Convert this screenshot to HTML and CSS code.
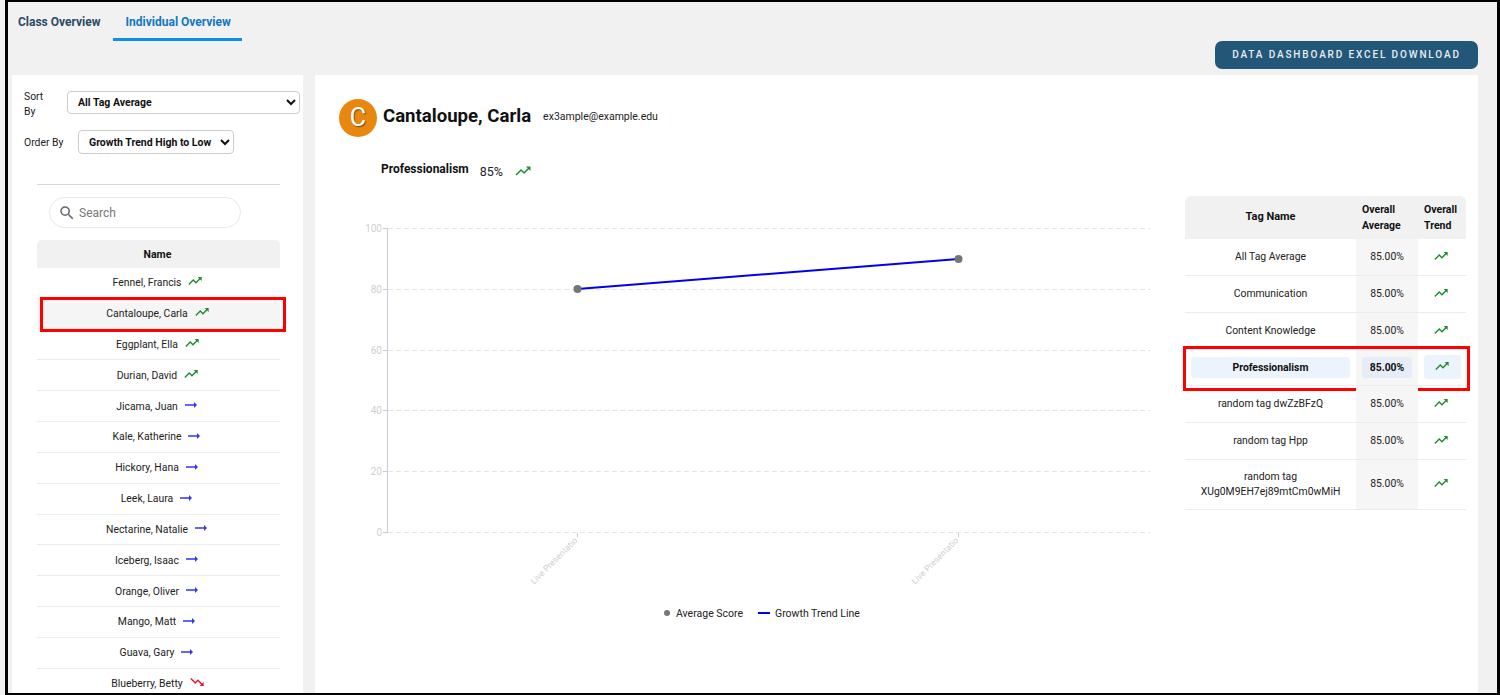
FILE: index.html
```html
<!DOCTYPE html>
<html lang="en">
<head>
<meta charset="utf-8">
<title>Individual Overview</title>
<link rel="stylesheet" href="styles.css">
</head>
<body>
<svg class="sprites" width="0" height="0" aria-hidden="true">
  <symbol id="up" viewBox="0 0 24 24"><path d="M16 6l2.29 2.29-4.88 4.88-4-4L2 16.59 3.41 18l6-6 4 4 6.3-6.29L22 12V6z"/></symbol>
  <symbol id="flat" viewBox="0 0 24 24"><path d="M16.01 11H4v2h12.01v3L20 12l-3.99-4z"/></symbol>
  <symbol id="down" viewBox="0 0 24 24"><path d="M16 18l2.29-2.29-4.88-4.88-4 4L2 7.41 3.41 6l6 6 4-4 6.3 6.29L22 12v6z"/></symbol>
</svg>
<div class="frame">
  <nav class="tabs">
    <a class="tab">Class Overview</a>
    <a class="tab active">Individual Overview</a>
  </nav>
  <div class="actions"><button class="download">DATA DASHBOARD EXCEL DOWNLOAD</button></div>
  <div class="columns">
    <aside class="side">
      <div class="field sort">
        <label class="lbl">Sort By</label>
        <select class="sel"><option>All Tag Average</option></select>
      </div>
      <div class="field order">
        <label class="lbl">Order By</label>
        <select class="sel"><option>Growth Trend High to Low</option></select>
      </div>
      <hr class="rule">
      <div class="search">
        <svg class="lens" viewBox="0 0 24 24"><path d="M15.5 14h-.79l-.28-.27A6.47 6.47 0 0 0 16 9.5 6.5 6.5 0 1 0 9.5 16c1.61 0 3.09-.59 4.23-1.57l.27.28v.79l5 4.99L20.49 19l-4.99-5zm-6 0C7.01 14 5 11.99 5 9.5S7.01 5 9.5 5 14 7.01 14 9.5 11.99 14 9.5 14z"/></svg>
        <span>Search</span>
      </div>
      <div class="names">
        <div class="names-head">Name</div>
        <div class="person">Fennel, Francis<svg class="ic up"><use href="#up"/></svg></div>
        <div class="person picked">Cantaloupe, Carla<svg class="ic up"><use href="#up"/></svg><span class="redbox"></span></div>
        <div class="person">Eggplant, Ella<svg class="ic up"><use href="#up"/></svg></div>
        <div class="person">Durian, David<svg class="ic up"><use href="#up"/></svg></div>
        <div class="person">Jicama, Juan<svg class="ic flat"><use href="#flat"/></svg></div>
        <div class="person">Kale, Katherine<svg class="ic flat"><use href="#flat"/></svg></div>
        <div class="person">Hickory, Hana<svg class="ic flat"><use href="#flat"/></svg></div>
        <div class="person">Leek, Laura<svg class="ic flat"><use href="#flat"/></svg></div>
        <div class="person">Nectarine, Natalie<svg class="ic flat"><use href="#flat"/></svg></div>
        <div class="person">Iceberg, Isaac<svg class="ic flat"><use href="#flat"/></svg></div>
        <div class="person">Orange, Oliver<svg class="ic flat"><use href="#flat"/></svg></div>
        <div class="person">Mango, Matt<svg class="ic flat"><use href="#flat"/></svg></div>
        <div class="person">Guava, Gary<svg class="ic flat"><use href="#flat"/></svg></div>
        <div class="person">Blueberry, Betty<svg class="ic down"><use href="#down"/></svg></div>
      </div>
    </aside>
    <main class="detail">
      <header class="who">
        <div class="avatar">C</div>
        <h1 class="who-name">Cantaloupe, Carla</h1>
        <span class="who-mail">ex3ample@example.edu</span>
      </header>
      <div class="metric">
        <strong class="metric-name">Professionalism</strong>
        <span class="metric-val">85%</span>
        <svg class="ic up metric-ic"><use href="#up"/></svg>
      </div>
      <div class="body">
        <svg class="chart" width="860" height="440" viewBox="0 0 860 440">
          <g class="grid">
            <line x1="73" x2="835" y1="32.5" y2="32.5"/>
            <line x1="73" x2="835" y1="93.5" y2="93.5"/>
            <line x1="73" x2="835" y1="154.5" y2="154.5"/>
            <line x1="73" x2="835" y1="214.5" y2="214.5"/>
            <line x1="73" x2="835" y1="275.5" y2="275.5"/>
            <line x1="73" x2="835" y1="336.5" y2="336.5"/>
          </g>
          <g class="axis">
            <line x1="72.5" x2="72.5" y1="32" y2="337"/>
            <line x1="68" x2="72" y1="32.5" y2="32.5"/>
            <line x1="68" x2="72" y1="93.5" y2="93.5"/>
            <line x1="68" x2="72" y1="154.5" y2="154.5"/>
            <line x1="68" x2="72" y1="214.5" y2="214.5"/>
            <line x1="68" x2="72" y1="275.5" y2="275.5"/>
            <line x1="68" x2="72" y1="336.5" y2="336.5"/>
            <line x1="262.5" x2="262.5" y1="337" y2="341"/>
            <line x1="643.5" x2="643.5" y1="337" y2="341"/>
          </g>
          <g class="ylabels">
            <text x="67" y="36">100</text>
            <text x="67" y="97">80</text>
            <text x="67" y="158">60</text>
            <text x="67" y="218">40</text>
            <text x="67" y="279">20</text>
            <text x="67" y="340">0</text>
          </g>
          <g class="xlabels">
            <text transform="translate(263 345) rotate(-45)">Live Presentatio</text>
            <text transform="translate(644 345) rotate(-45)">Live Presentatio</text>
          </g>
          <line class="trend" x1="262.5" y1="93" x2="643.5" y2="63"/>
          <circle class="pt" cx="262.5" cy="93" r="4"/>
          <circle class="pt" cx="643.5" cy="63" r="4"/>
          <circle class="pt-legend" cx="352" cy="417" r="3"/>
          <text class="legend" x="361" y="421">Average Score</text>
          <line class="trend" x1="443" x2="455" y1="417" y2="417"/>
          <text class="legend" x="460" y="421">Growth Trend Line</text>
        </svg>
        <table class="tags">
          <thead>
            <tr><th class="c-name">Tag Name</th><th class="c-avg">Overall Average</th><th class="c-tr">Overall Trend</th></tr>
          </thead>
          <tbody>
            <tr><td class="c-name">All Tag Average</td><td class="c-avg">85.00%</td><td class="c-tr"><svg class="ic up"><use href="#up"/></svg></td></tr>
            <tr><td class="c-name">Communication</td><td class="c-avg">85.00%</td><td class="c-tr"><svg class="ic up"><use href="#up"/></svg></td></tr>
            <tr><td class="c-name">Content Knowledge</td><td class="c-avg">85.00%</td><td class="c-tr"><svg class="ic up"><use href="#up"/></svg></td></tr>
            <tr class="hl">
              <td class="c-name"><span class="pill">Professionalism</span><span class="redbox"></span></td>
              <td class="c-avg"><span class="pill">85.00%</span></td>
              <td class="c-tr"><span class="pill"><svg class="ic up"><use href="#up"/></svg></span></td>
            </tr>
            <tr><td class="c-name">random tag dwZzBFzQ</td><td class="c-avg">85.00%</td><td class="c-tr"><svg class="ic up"><use href="#up"/></svg></td></tr>
            <tr><td class="c-name">random tag Hpp</td><td class="c-avg">85.00%</td><td class="c-tr"><svg class="ic up"><use href="#up"/></svg></td></tr>
            <tr class="tall"><td class="c-name">random tag<br>XUg0M9EH7ej89mtCm0wMiH</td><td class="c-avg">85.00%</td><td class="c-tr"><svg class="ic up"><use href="#up"/></svg></td></tr>
          </tbody>
        </table>
      </div>
    </main>
  </div>
</div>
</body>
</html>
```
FILE: styles.css
```css
* { box-sizing: border-box; }
html, body { margin: 0; height: 100%; }
body {
  background: #f1f1f1;
  font-family: Roboto, "Liberation Sans", sans-serif;
  overflow: hidden;
  padding-left: 5px;
}
.sprites { position: absolute; }
.frame {
  width: 1495px;
  height: 695px;
  border-style: solid;
  border-color: #000;
  border-width: 2px 3px 2px 3px;
  background: #f1f1f1;
  overflow: hidden;
}
.tabs { display: flex; height: 39px; }
.tab {
  height: 39px;
  padding: 12px 11px 0 10px;
  font-size: 12px;
  font-weight: 700;
  line-height: 16px;
  color: #2b4a62;
}
.tab.active {
  margin-left: 1px;
  padding: 12px 11px 0 13px;
  color: #0f77c0;
  border-bottom: 3px solid #0a90e8;
}
.actions { display: flex; justify-content: flex-end; height: 34px; padding-right: 19px; }
.download {
  width: 263px;
  height: 28px;
  padding: 0 0 2px;
  border: 0;
  border-radius: 7px;
  background: #22577a;
  color: #e8eef2;
  font: 500 10px Roboto, sans-serif;
  letter-spacing: 1.86px;
}
.columns { display: flex; gap: 12px; padding-left: 4px; height: 620px; }
.side { width: 291px; background: #fff; padding-top: 15px; flex: none; }
.field { display: flex; align-items: center; font-size: 10.4px; color: #222; }
.sort { padding-left: 12px; height: 24px; }
.sort .lbl { width: 30px; margin: 3px 13px 0 0; line-height: 15px; }
.sort .sel { width: 233px; }
.order { padding-left: 12px; margin-top: 15px; height: 25px; }
.order .lbl { width: 54px; margin-top: 2px; white-space: nowrap; }
.order .sel { width: 156px; height: 24px; padding-top: 1px; }
.sel {
  height: 23px;
  padding: 0 0 0 6px;
  border: 1px solid #ccc;
  border-radius: 4px;
  background: #fff;
  font: 700 10.5px Roboto, sans-serif;
  color: #111;
}
.rule { margin: 30px 23px 0 25px; border: 0; border-top: 1px solid #d9d9d9; height: 1px; }
.search {
  display: flex;
  align-items: center;
  gap: 3px;
  width: 192px;
  height: 31px;
  margin: 12px 0 0 37px;
  padding-left: 8px;
  border: 1px solid #e8e8e8;
  border-radius: 16px;
  font-size: 12px;
  color: #777;
}
.lens { width: 18px; height: 18px; fill: #666; }
.names { margin: 12px 23px 0 25px; }
.names-head {
  height: 27.75px;
  padding: 1px 2px 0 0;
  background: #f1f1f1;
  border-radius: 5px 5px 0 0;
  text-align: center;
  font-size: 10.5px;
  font-weight: 700;
  line-height: 28px;
  color: #111;
}
.person {
  position: relative;
  display: flex;
  align-items: center;
  justify-content: center;
  height: 30.85px;
  border-bottom: 1.5px solid #ececec;
  font-size: 10.4px;
  color: #222;
  padding-right: 1px;
}
.person.picked { background: #f5f5f5; }
.redbox {
  position: absolute;
  border: 3px solid #f00;
  pointer-events: none;
}
.person .redbox { left: 3px; right: -6px; top: -2px; bottom: -4px; }
.ic { width: 16px; height: 16px; margin-left: 6px; flex: none; }
.ic.up { fill: #1f8a2e; }
.ic.flat { fill: #3232ff; width: 18px; height: 18px; margin-left: 4px; margin-top: -2px; }
.ic.down { fill: #f01030; }
.person .ic.up, .person .ic.down { margin-top: -3px; }
.detail { width: 1163px; background: #fff; flex: none; padding: 24px 0 0 24px; }
.who { display: flex; align-items: center; height: 38px; }
.avatar {
  width: 38px;
  height: 38px;
  border-radius: 50%;
  background: #e8870e;
  color: #fff;
  font-size: 25px;
  line-height: 38px;
  text-align: center;
  text-shadow: 1px 1px 1px #6b4a1a;
}
.who-name { margin: 0 0 4px 6px; font-size: 18.6px; font-weight: 700; color: #111; }
.who-mail { margin: 0 0 4px 12px; font-size: 10.5px; color: #222; }
.metric { display: flex; align-items: center; height: 20px; margin: 24px 0 0 42px; color: #222; }
.metric-name { font-size: 12px; color: #111; margin-top: -5px; font-weight: 700; }
.metric-val { margin-left: 11px; font-size: 12.5px; }
.metric-ic { margin-left: 11px; width: 18px; height: 18px; }
.body { display: flex; align-items: flex-start; margin-top: 6px; }
.chart { flex: none; margin: 9px 0 0 -24px; display: block; }
.grid line { stroke: #e6e6e6; stroke-dasharray: 5 3; }
.axis line { stroke: #c4ccd4; }
.ylabels text { fill: #cfcfcf; font-size: 10px; text-anchor: end; }
.xlabels text { fill: #d0d0d0; font-size: 8.7px; text-anchor: end; }
.trend { stroke: #0000f0; stroke-width: 2; }
.pt { fill: #757575; }
.pt-legend { fill: #777; }
.legend { fill: #222; font-size: 10.5px; }
.tags {
  flex: none;
  width: 281px;
  margin: 9px 0 0 10px;
  border-collapse: collapse;
  table-layout: fixed;
  font-size: 10.4px;
  color: #222;
}
.tags th {
  height: 43px;
  background: #f1f1f1;
  font-weight: 700;
  font-size: 10.5px;
  line-height: 16px;
  color: #111;
  padding: 0;
}
.tags th.c-name { font-size: 11px; padding-bottom: 2px; }
.tags th:first-child { border-top-left-radius: 6px; }
.tags th:last-child { border-top-right-radius: 6px; }
.tags th.c-avg, .tags th.c-tr { text-align: left; padding-left: 6px; }
.tags td {
  position: relative;
  height: 36.7px;
  padding: 0 0 0.5px;
  text-align: center;
  border-bottom: 1.5px solid #ececec;
  line-height: 15px;
}
.tags .tall td { height: 50px; }
.c-name { width: 171px; }
.c-avg { width: 62px; }
.c-tr { width: 48px; }
td.c-avg { background: #f6f6f6; }
.tags td .ic { margin: 0 2px 0 0; vertical-align: middle; position: relative; top: -1px; }
.hl .pill {
  display: flex;
  align-items: center;
  justify-content: center;
  height: 21px;
  margin: 0 6px;
  border-radius: 3px;
  background: #ebf3fd;
  font-weight: 700;
  color: #111;
}
.hl .c-avg .pill { background: #e6edf7; }
.hl .c-tr .pill { height: 24px; margin: 0 5px 0 6px; }
.tags td .redbox { left: -2px; top: -4px; width: 287px; height: 45px; }
```
